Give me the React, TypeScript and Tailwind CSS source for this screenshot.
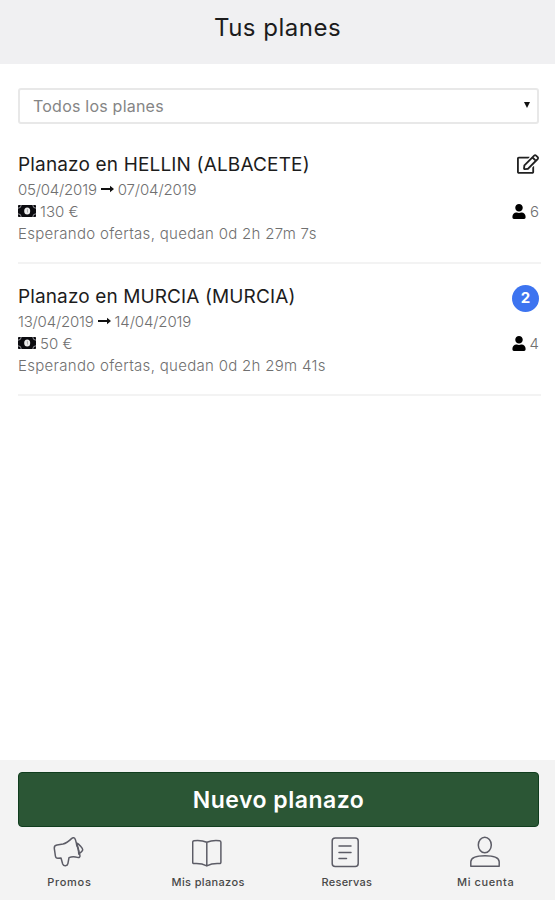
import type { ReactNode } from "react";
import { FaRegEdit, FaUser } from "react-icons/fa";

interface Plan {
  title: string;
  titleClass: string;
  from: string;
  to: string;
  price: string;
  status: string;
  people: number;
  offers?: number;
}

const plans: Plan[] = [
  {
    title: "Planazo en HELLIN (ALBACETE)",
    titleClass: "tracking-[0.16px]",
    from: "05/04/2019",
    to: "07/04/2019",
    price: "130 €",
    status: "Esperando ofertas, quedan 0d 2h 27m 7s",
    people: 6,
  },
  {
    title: "Planazo en MURCIA (MURCIA)",
    titleClass: "tracking-[0.12px]",
    from: "13/04/2019",
    to: "14/04/2019",
    price: "50 €",
    status: "Esperando ofertas, quedan 0d 2h 29m 41s",
    people: 4,
    offers: 2,
  },
];

function ArrowIcon() {
  return (
    <svg viewBox="0 0 13 8" className="mb-0.5 h-2 w-[13px]" aria-hidden>
      <path d="M0 3.100h9V.8L13 4 9 7.200V4.900H0z" fill="#111" />
    </svg>
  );
}

function CashIcon() {
  return (
    <svg viewBox="0 0 18 12" className="mb-0.5 h-3 w-[18px]" aria-hidden>
      <rect width="18" height="12" rx="0.8" fill="#0b0b0f" />
      <path
        d="M0 3.200A3.200 3.200 0 0 0 3.200 0M14.800 0A3.200 3.200 0 0 0 18 3.200M0 8.800A3.200 3.200 0 0 1 3.200 12M14.800 12A3.200 3.200 0 0 1 18 8.800"
        fill="none"
        stroke="#a5a5ac"
        strokeWidth="0.9"
      />
      <ellipse cx="9.200" cy="6" rx="3" ry="3.500" fill="#ececec" />
      <path d="M8.700 4.800 9.500 4.400v3.100" fill="none" stroke="#999" strokeWidth="0.7" />
    </svg>
  );
}

function PlanRow({ plan }: { plan: Plan }) {
  return (
    <li className="flex h-[132px] justify-between border-b-2 border-[#f3f3f3] pt-[21px] pr-0.5">
      <div>
        <h2 className={`text-[19px] leading-6 text-[#1c1c1c] ${plan.titleClass}`}>
          {plan.title}
        </h2>
        <div className="mt-0.5 text-[15px] leading-[22px] font-light text-[#707070]">
          <p className="flex items-center gap-1">
            <span className="tracking-[-0.2px]">{plan.from}</span>
            <ArrowIcon />
            <span className="tracking-[-0.12px]">{plan.to}</span>
          </p>
          <p className="flex items-center gap-1">
            <CashIcon />
            <span>{plan.price}</span>
          </p>
          <p className="tracking-[0.3px]">{plan.status}</p>
        </div>
      </div>
      <div className="flex flex-col items-end">
        <div className="flex h-6 items-center">
          {plan.offers ? (
            <span className="mt-0.5 grid size-[27px] shrink-0 place-items-center rounded-full bg-[#3d74f0] text-[15px] font-bold text-white">
              {plan.offers}
            </span>
          ) : (
            <FaRegEdit className="mb-0.5 h-5 w-[22px] text-[#222]" />
          )}
        </div>
        <div className="mt-6 flex h-[22px] items-center gap-1 text-[15px] font-light text-[#707070]">
          <FaUser className="mb-0.5 h-[15px] w-[14px] text-black" />
          <span>{plan.people}</span>
        </div>
      </div>
    </li>
  );
}

function NavIcon({ children }: { children: ReactNode }) {
  return (
    <svg
      viewBox="0 0 32 32"
      className="size-8"
      fill="none"
      stroke="#5c5c66"
      strokeWidth="1.5"
      strokeLinecap="round"
      strokeLinejoin="round"
      aria-hidden
    >
      {children}
    </svg>
  );
}

const tabs = [
  {
    label: "Promos",
    labelClass: "tracking-[0.7px]",
    icon: (
      <NavIcon>
        <path d="M4 8.900 10 8C13.500 7.200 16 5 18.500 2.600c1.500-1.400 3.200-1 3.800.8l4.600 15.800c.5 1.700-.7 2.700-2.400 2.200-3-.9-5.500-1-8.500.2l-1.100 6c-.5 2.600-4.200 2.900-5.200.4L8 22l-3.200.2c-1.500 0-2.200-.8-2.400-2.200L1.300 12.300C1.100 10.300 2 9.200 4 8.900z" />
        <path d="M23.500 7c2.700 1.300 6.200 5 6.200 6.800 0 1.500-2 2.800-4 4.200M23.500 8.500c1.700 2.500 2.500 5.500 2.200 9" />
      </NavIcon>
    ),
  },
  {
    label: "Mis planazos",
    labelClass: "tracking-[0.35px]",
    icon: (
      <NavIcon>
        <path d="M14.800 6.300C10.500 4.500 6.500 4.300 2 4.800c-.8.1-1.300.6-1.300 1.400v20c0 1 .7 1.500 1.700 1.400 4.500-.3 8.300.2 12.400 2.300 4.100-2.100 7.900-2.600 12.400-2.300 1 .1 1.700-.4 1.700-1.400v-20c0-.8-.5-1.300-1.300-1.400-4.500-.5-8.500-.3-12.800 1.500zM14.800 6.300v23.600" />
      </NavIcon>
    ),
  },
  {
    label: "Reservas",
    labelClass: "tracking-[0.25px]",
    icon: (
      <NavIcon>
        <rect x="1.200" y="2" width="26" height="28.500" rx="3" />
        <path d="M8 10h12M8 16.500h12M8 22.500h7.500" />
      </NavIcon>
    ),
  },
  {
    label: "Mi cuenta",
    labelClass: "tracking-[0.6px]",
    icon: (
      <NavIcon>
        <ellipse cx="14.800" cy="9" rx="6.500" ry="7.800" />
        <path d="M0.800 30.200v-4.400C1 21.500 7.500 19.800 15 19.800s14 1.700 14.200 6v4.400z" />
      </NavIcon>
    ),
  },
];

export default function App() {
  return (
    <div className="flex h-screen flex-col bg-white font-['Inter',sans-serif]">
      <header className="flex h-16 shrink-0 items-center justify-center bg-[#f0f0f2] pb-2">
        <h1 className="text-[24px] tracking-[0.5px] text-[#1c1c1c]">Tus planes</h1>
      </header>

      <main className="flex-1 pt-6 pr-3.5 pl-[18px]">
        <div className="flex h-9 w-[521px] items-center justify-between rounded-[3px] border-2 border-[#e8e8e8] pr-[7px] pl-[13px]">
          <span className="text-[16px] tracking-[0.22px] text-[#858585]">Todos los planes</span>
          <svg viewBox="0 0 6 6" className="mb-0.5 size-1.5" aria-hidden>
            <path d="M0 0h6L3 6z" fill="#111" />
          </svg>
        </div>
        <ul className="mt-2">
          {plans.map((plan) => (
            <PlanRow key={plan.title} plan={plan} />
          ))}
        </ul>
      </main>

      <footer className="h-[140px] shrink-0 bg-[#f3f3f3] pt-3">
        <button className="ml-[18px] block h-[55px] w-[521px] rounded-[4px] border border-[#103d1e] bg-[#2b5635] pt-px text-[23px] font-semibold tracking-[0.5px] text-white">
          Nuevo planazo
        </button>
        <nav className="mt-[9px] grid grid-cols-4">
          {tabs.map((tab) => (
            <a key={tab.label} className="flex flex-col items-center">
              {tab.icon}
              <span
                className={`mt-1.5 text-[11px] leading-4 font-medium text-[#484848] ${tab.labelClass}`}
              >
                {tab.label}
              </span>
            </a>
          ))}
        </nav>
      </footer>
    </div>
  );
}
